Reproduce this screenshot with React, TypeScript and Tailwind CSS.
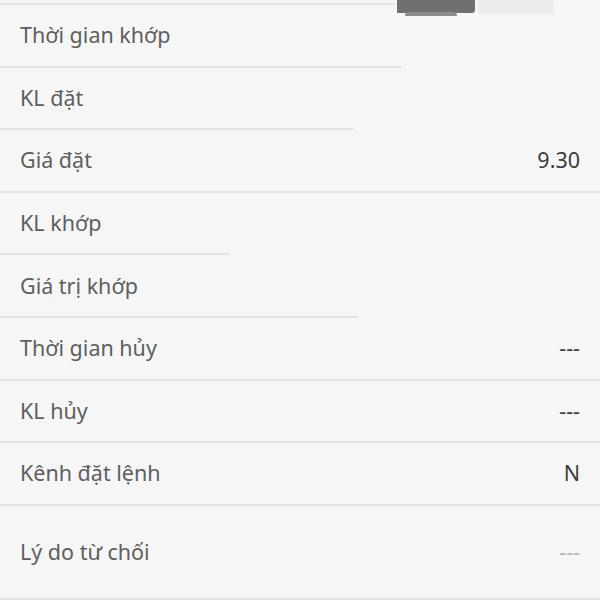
import React from 'react'

interface OrderRow {
  label: string
  value?: string
  line: string
  muted?: boolean
  tall?: boolean
}

const rows: OrderRow[] = [
  { label: 'Thời gian khớp', line: 'w-[401px]' },
  { label: 'KL đặt', line: 'w-[353px]' },
  { label: 'Giá đặt', value: '9.30', line: 'w-full' },
  { label: 'KL khớp', line: 'w-[230px]' },
  { label: 'Giá trị khớp', line: 'w-[358px]' },
  { label: 'Thời gian hủy', value: '---', line: 'w-full' },
  { label: 'KL hủy', value: '---', line: 'w-full' },
  { label: 'Kênh đặt lệnh', value: 'N', line: 'w-full' },
  { label: 'Lý do từ chối', value: '---', line: 'w-full', muted: true, tall: true },
]

const App: React.FC = () => {
  return (
    <div
      className="relative w-[600px] h-[600px] overflow-hidden bg-[#f6f6f6]"
      style={{ fontFamily: '"Noto Sans", Lato, sans-serif' }}
    >
      {/* mảnh header còn sót ở mép trên */}
      <div className="absolute top-0 left-[397px] w-[78px] h-[13px] rounded-br-[3px] bg-[#707070]" />
      <div className="absolute top-[12px] left-[405px] w-[52px] h-[4px] rounded-t-full bg-[#8c8c8c]" />
      <div className="absolute top-0 left-[478px] w-[76px] h-[14px] bg-[#ededed]" />

      <div className="pt-[3px]">
        <div className="h-[2px] w-[395px] bg-[#e3e3e3]" />
        {rows.map(row => (
          <div key={row.label} className="flex flex-col">
            <div
              className={`flex items-center justify-between pl-[20px] pr-[20px] ${row.tall ? 'h-[92px]' : 'h-[60.6px]'}`}
            >
              <span className="text-[21.5px] text-[#5e5e5e]">{row.label}</span>
              {row.value && (
                <span
                  className={`text-[21.5px] ${row.muted ? 'text-[#b3b3b3]' : 'text-[#3c3c3c]'}`}
                >
                  {row.value}
                </span>
              )}
            </div>
            <div className={`h-[2px] bg-[#e3e3e3] ${row.line}`} />
          </div>
        ))}
      </div>
    </div>
  )
}

export default App
